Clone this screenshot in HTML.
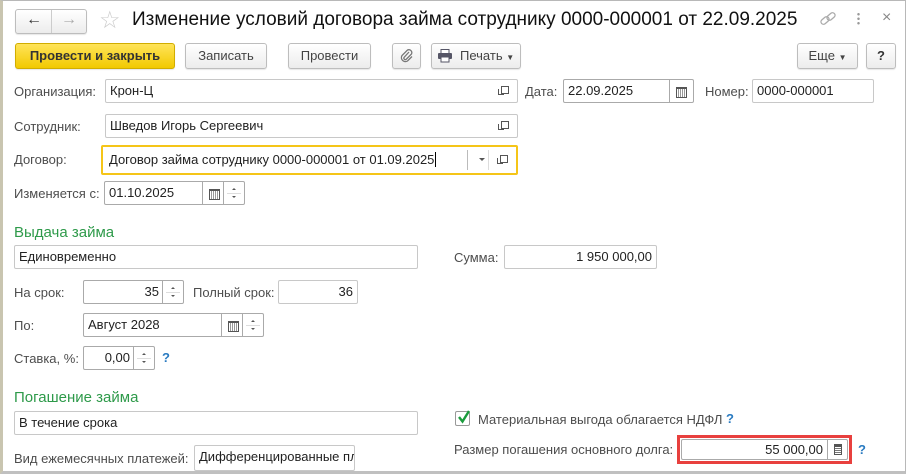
<!DOCTYPE html>
<html><head><meta charset="utf-8"><style>
*{box-sizing:border-box;margin:0;padding:0}
body{width:906px;height:474px;background:#fff;font-family:"Liberation Sans",Arial,sans-serif;font-size:13px;color:#333;position:relative;overflow:hidden}
.a{position:absolute}
.frame{position:absolute;left:0;top:0;width:906px;height:474px;border:1px solid #b8b8b8;border-left:3px solid #c9c5b0;border-bottom:3px solid #c0c0c0}
.btn{position:absolute;height:26px;border:1px solid #bdbdbd;border-radius:3px;background:linear-gradient(#fff,#ececec);text-align:center;line-height:24px;color:#444;box-shadow:0 1px 1px rgba(0,0,0,.1)}
.lbl{position:absolute;color:#4d4d4d;line-height:16px}
.in{position:absolute;height:24px;border:1px solid #c8c8c8;border-radius:2px;background:#fff;line-height:22px;padding:0 4px;color:#222;white-space:nowrap;overflow:hidden}
.r{text-align:right}
.ic{position:absolute;top:0;height:22px;border-left:1px solid #c8c8c8;width:21px}
.h{position:absolute;color:#2e9a4a;font-size:15px}
.q{position:absolute;color:#2a7bc1;font-size:13px;font-weight:bold}
.sp:before{content:"";position:absolute;left:8px;top:6px;border:2px solid transparent;border-bottom:2px solid #555;border-top:0}
.sp:after{content:"";position:absolute;left:8px;top:14px;border:2px solid transparent;border-top:2px solid #555;border-bottom:0}
.sp i{position:absolute;left:3px;right:3px;top:11px;border-top:1px solid #ddd}
.cal:after{content:"";position:absolute;left:6px;top:7px;width:9px;height:8px;border:1px solid #555;border-top:2px solid #555;background:repeating-linear-gradient(90deg,#fff 0 1px,#999 1px 2px)}
.op:before{content:"";position:absolute;left:8px;top:6px;width:6px;height:6px;border:1px solid #555}
.op:after{content:"";position:absolute;left:5px;top:9px;width:5px;height:5px;border:1px solid #555;border-top:none;border-right:none}
</style></head><body>
<div class="frame"></div>
<div class="btn" style="left:15px;top:9px;width:72px;height:25px;"></div>
<div class="a" style="left:51px;top:10px;height:23px;border-left:1px solid #ccc"></div>
<div class="a" style="left:26px;top:11px;font-size:16px;color:#333;font-weight:bold">&#8592;</div>
<div class="a" style="left:61px;top:11px;font-size:16px;color:#aaa;font-weight:bold">&#8594;</div>
<div class="a" style="left:99px;top:6px;font-size:24px;color:#ccc">&#9734;</div>
<div class="a" style="left:132px;top:9px;font-size:19px;color:#111;white-space:nowrap">Изменение условий договора займа сотруднику 0000-000001 от 22.09.2025</div>
<svg class="a" style="left:819px;top:11px" width="18" height="16" viewBox="0 0 18 16" fill="none" stroke="#aaa" stroke-width="1.3"><rect x="1.5" y="7" width="9" height="5" rx="2.5" transform="rotate(-40 6 9.5)"/><rect x="7.5" y="3" width="9" height="5" rx="2.5" transform="rotate(-40 12 5.5)"/></svg>
<div class="a" style="left:857px;top:12px;width:3px;height:13px;background:radial-gradient(circle,#999 1px,transparent 1.5px) 0 0/3px 4.5px"></div>
<div class="a" style="left:882px;top:9px;font-size:16px;color:#888">×</div>
<div class="btn" style="left:15px;top:43px;width:160px;background:linear-gradient(#ffe45a,#f2c900);border-color:#d1ad00;color:#333;font-weight:bold">Провести и закрыть</div>
<div class="btn" style="left:185px;top:43px;width:82px">Записать</div>
<div class="btn" style="left:288px;top:43px;width:83px">Провести</div>
<div class="btn" style="left:392px;top:43px;width:29px"></div>
<svg class="a" style="left:399px;top:48px" width="15" height="15" viewBox="0 0 15 15" fill="none" stroke="#777" stroke-width="1.3"><path d="M10 4 L5 9.5 a1.5 1.5 0 0 0 2 2 L12.5 6 a3 3 0 0 0 -4 -4 L3 7.5 a4 4 0 0 0 5.5 5.5 L13 8.5"/></svg>
<div class="btn" style="left:431px;top:43px;width:90px;text-align:left;padding-left:28px">Печать <span style="font-size:8px">▼</span></div>
<svg class="a" style="left:437px;top:49px" width="16" height="14" viewBox="0 0 16 14"><rect x="4" y="0.5" width="8" height="4" fill="#fff" stroke="#556"/><rect x="1" y="4" width="14" height="6" rx="1" fill="#556"/><rect x="4" y="8" width="8" height="5" fill="#fff" stroke="#556"/></svg>
<div class="btn" style="left:797px;top:43px;width:61px">Еще <span style="font-size:8px">▼</span></div>
<div class="btn" style="left:866px;top:43px;width:30px;font-weight:bold;color:#333">?</div>
<div class="lbl" style="left:14px;top:84px">Организация:</div>
<div class="in" style="left:105px;top:79px;width:413px">Крон-Ц<div class="ic op" style="left:387px;border:none"></div></div>
<div class="lbl" style="left:525px;top:84px">Дата:</div>
<div class="in" style="left:563px;top:79px;width:131px;border-color:#aaa">22.09.2025<div class="ic cal" style="left:105px;border-color:#aaa"></div></div>
<div class="lbl" style="left:705px;top:84px">Номер:</div>
<div class="in" style="left:752px;top:79px;width:122px">0000-000001</div>
<div class="lbl" style="left:14px;top:119px">Сотрудник:</div>
<div class="in" style="left:105px;top:114px;width:413px">Шведов Игорь Сергеевич<div class="ic op" style="left:387px;border:none"></div></div>
<div class="lbl" style="left:14px;top:152px">Договор:</div>
<div class="in" style="left:101px;top:145px;width:417px;height:30px;border:2px solid #f5c518;line-height:26px;padding-left:6px">Договор займа сотруднику 0000-000001 от 01.09.2025<span style="border-left:1px solid #000;margin-left:1px"></span>
<div class="a" style="left:364px;top:3px;height:20px;border-left:1px solid #bbb"></div>
<div class="a" style="left:376px;top:11px;border:3px solid transparent;border-top:3px solid #555"></div>
<div class="a" style="left:385px;top:3px;height:20px;border-left:1px solid #ddd"></div>
<div class="ic op" style="left:389px;top:2px;border:none"></div></div>
<div class="lbl" style="left:14px;top:186px">Изменяется с:</div>
<div class="in" style="left:104px;top:181px;width:141px;border-color:#aaa">01.10.2025<div class="ic cal" style="left:97px;border-color:#aaa"></div><div class="ic sp" style="left:118px;border-color:#aaa"><i></i></div></div>
<div class="h" style="left:14px;top:224px">Выдача займа</div>
<div class="in" style="left:14px;top:245px;width:404px">Единовременно</div>
<div class="lbl" style="left:454px;top:250px">Сумма:</div>
<div class="in r" style="left:504px;top:245px;width:153px">1 950 000,00</div>
<div class="lbl" style="left:14px;top:285px">На срок:</div>
<div class="in r" style="left:83px;top:280px;width:101px;border-color:#aaa;padding-right:24px">35<div class="ic sp" style="left:78px;border-color:#aaa"><i></i></div></div>
<div class="lbl" style="left:193px;top:285px">Полный срок:</div>
<div class="in r" style="left:278px;top:280px;width:80px">36</div>
<div class="lbl" style="left:14px;top:318px">По:</div>
<div class="in" style="left:83px;top:313px;width:181px;border-color:#aaa">Август 2028<div class="ic cal" style="left:137px;border-color:#aaa"></div><div class="ic sp" style="left:158px;border-color:#aaa"><i></i></div></div>
<div class="lbl" style="left:14px;top:351px">Ставка, %:</div>
<div class="in r" style="left:83px;top:346px;width:72px;border-color:#aaa;padding-right:24px">0,00<div class="ic sp" style="left:49px;border-color:#aaa"><i></i></div></div>
<div class="q" style="left:162px;top:350px">?</div>
<div class="h" style="left:14px;top:389px">Погашение займа</div>
<div class="in" style="left:14px;top:411px;width:404px">В течение срока</div>
<div class="a" style="left:455px;top:411px;width:15px;height:15px;border:1px solid #999;border-radius:2px;background:#fff"></div>
<svg class="a" style="left:456px;top:409px" width="16" height="16" viewBox="0 0 16 16"><path d="M3 8 L6.5 12.5 L13 2" fill="none" stroke="#1a9b3c" stroke-width="2.4"/></svg>
<div class="lbl" style="left:478px;top:412px">Материальная выгода облагается НДФЛ</div>
<div class="q" style="left:726px;top:411px">?</div>
<div class="lbl" style="left:454px;top:442px">Размер погашения основного долга:</div>
<div class="a" style="left:677px;top:435px;width:175px;height:29px;border:3px solid #e8403e"></div>
<div class="in r" style="left:681px;top:439px;width:167px;height:21px;line-height:19px;border-color:#aaa;padding-right:24px">55 000,00<div class="ic" style="left:145px;height:19px;border-color:#aaa"><div class="a" style="left:6px;top:4px;width:8px;height:11px;border:1px solid #555;border-top:3px solid #555;background:repeating-linear-gradient(#fff 0 1px,#777 1px 2px)"></div></div></div>
<div class="q" style="left:858px;top:442px">?</div>
<div class="lbl" style="left:14px;top:451px">Вид ежемесячных платежей:</div>
<div class="in" style="left:194px;top:445px;width:161px;height:26px">Дифференцированные пл</div>
</body></html>
